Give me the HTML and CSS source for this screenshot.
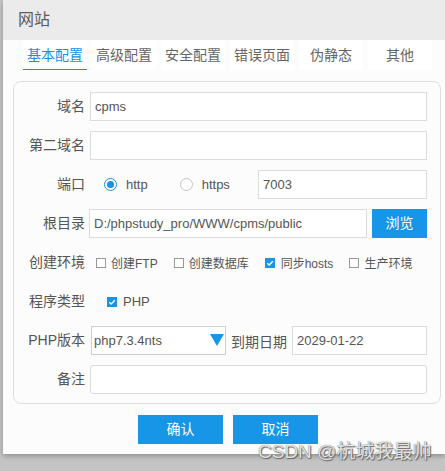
FILE: index.html
```html
<!DOCTYPE html>
<html lang="zh-CN">
<head>
<meta charset="utf-8">
<title>网站</title>
<link rel="stylesheet" href="styles.css">
</head>
<body>
<div class="dialog">
  <div class="header">网站</div>
  <div class="tabs">
    <div class="tab active">基本配置</div>
    <div class="tab">高级配置</div>
    <div class="tab">安全配置</div>
    <div class="tab">错误页面</div>
    <div class="tab">伪静态</div>
    <div class="tab">其他</div>
  </div>
  <div class="panel">
    <div class="label">域名</div>
    <div class="field"><div class="input full">cpms</div></div>

    <div class="label">第二域名</div>
    <div class="field"><div class="input full"></div></div>

    <div class="label">端口</div>
    <div class="field">
      <span class="radio checked"></span><span class="opt-text">http</span>
      <span class="radio second"></span><span class="opt-text">https</span>
      <div class="input port">7003</div>
    </div>

    <div class="label">根目录</div>
    <div class="field">
      <div class="input path">D:/phpstudy_pro/WWW/cpms/public</div>
      <div class="browse">浏览</div>
    </div>

    <div class="label">创建环境</div>
    <div class="field checks">
      <span class="check-item"><span class="box"></span>创建FTP</span>
      <span class="check-item"><span class="box"></span>创建数据库</span>
      <span class="check-item"><span class="box on"><svg viewBox="0 0 10 10" width="10" height="10"><path d="M2.2 5.2 L4.2 7 L7.8 3.2" fill="none" stroke="#fff" stroke-width="1.4"/></svg></span>同步hosts</span>
      <span class="check-item"><span class="box"></span>生产环境</span>
    </div>

    <div class="label">程序类型</div>
    <div class="field">
      <span class="check-item php"><span class="box on"><svg viewBox="0 0 10 10" width="10" height="10"><path d="M2.2 5.2 L4.2 7 L7.8 3.2" fill="none" stroke="#fff" stroke-width="1.4"/></svg></span>PHP</span>
    </div>

    <div class="label">PHP版本</div>
    <div class="field">
      <div class="select">php7.3.4nts<svg class="arrow" viewBox="0 0 14 12" width="14" height="12"><path d="M0 0 H14 L7 12 Z" fill="#1795e6"/></svg></div>
      <span class="inline-label">到期日期</span>
      <div class="input date">2029-01-22</div>
    </div>

    <div class="label">备注</div>
    <div class="field"><div class="input full note"></div></div>
  </div>
  <div class="actions">
    <div class="btn">确认</div>
    <div class="btn">取消</div>
  </div>
</div>
<div class="watermark">CSDN @杭城我最帅</div>
</body>
</html>
```

FILE: styles.css
```css
* { box-sizing: border-box; }
html, body {
  margin: 0;
  padding: 0;
}
body {
  width: 445px;
  height: 471px;
  background: #c4c4c4;
  font-family: "Liberation Sans", "Noto Sans CJK SC", sans-serif;
  color: #555;
  overflow: hidden;
  position: relative;
}
.dialog {
  margin-left: 3px;
  width: 442px;
  height: 454px;
  background: #fcfcfc;
  box-shadow: 0 2px 5px rgba(0, 0, 0, 0.28);
  display: flex;
  flex-direction: column;
}
.header {
  height: 40px;
  background: #ebebeb;
  font-size: 16px;
  line-height: 40px;
  padding-left: 15px;
  color: #5a5a5a;
}
.tabs {
  display: flex;
  gap: 5px;
  padding-left: 20px;
  height: 30px;
}
.tab {
  width: 64px;
  height: 30px;
  background: #fff;
  font-size: 14px;
  line-height: 30px;
  text-align: center;
  color: #666;
}
.tab.active {
  color: #1a8fe4;
  border-bottom: 1px solid #1a8fe4;
}
.panel {
  margin: 11px 0 0 10px;
  width: 428px;
  border: 1px solid #dedede;
  border-radius: 8px;
  padding: 10px 13px 9px 0;
  display: grid;
  grid-template-columns: 71px 1fr;
  column-gap: 5px;
  row-gap: 10px;
  grid-auto-rows: 29px;
}
.label {
  font-size: 14px;
  line-height: 29px;
  text-align: right;
  color: #555;
  white-space: nowrap;
}
.field {
  display: flex;
  align-items: center;
  min-width: 0;
}
.input {
  height: 29px;
  border: 1px solid #dcdcdc;
  background: #fff;
  font-size: 13px;
  line-height: 27px;
  padding-left: 4px;
  color: #555;
  white-space: nowrap;
  overflow: hidden;
}
.input.full { width: 337px; }
.input.note { border-radius: 3px; }
.radio {
  width: 13px;
  height: 13px;
  border-radius: 50%;
  border: 1px solid #c4c4c4;
  background: #fff;
  margin-left: 14px;
  position: relative;
  flex: none;
}
.radio.second { margin-left: 32px; }
.radio.checked { border-color: #1a8fe4; }
.radio.checked::after {
  content: "";
  position: absolute;
  left: 2px;
  top: 2px;
  width: 7px;
  height: 7px;
  border-radius: 50%;
  background: #1a8fe4;
}
.opt-text {
  font-size: 13px;
  margin-left: 9px;
  color: #555;
}
.input.port {
  margin-left: auto;
  width: 169px;
}
.input.path {
  width: 278px;
  margin-left: -1px;
}
.browse {
  margin-left: 5px;
  width: 55px;
  height: 29px;
  background: #1795e6;
  color: #fff;
  font-size: 14px;
  line-height: 29px;
  text-align: center;
}
.checks {
  gap: 16px;
  padding-left: 6px;
}
.check-item {
  display: flex;
  align-items: center;
  font-size: 12px;
  color: #555;
  white-space: nowrap;
}
.check-item.php {
  margin-left: 17px;
  font-size: 13px;
}
.box {
  width: 10px;
  height: 10px;
  border: 1px solid #9a9a9a;
  background: #fff;
  margin-right: 5px;
  flex: none;
  display: flex;
}
.box.on {
  border: none;
  background: #1795e6;
  margin-right: 6px;
}
.select {
  width: 135px;
  margin-left: 1px;
  height: 29px;
  border: 1px solid #cfcfcf;
  background: #fff;
  font-size: 13px;
  line-height: 27px;
  padding-left: 2px;
  color: #555;
  display: flex;
  align-items: center;
  justify-content: space-between;
  padding-right: 1px;
}
.select .arrow { margin-top: -2px; }
.inline-label {
  font-size: 14px;
  margin-left: 5px;
  margin-right: 5px;
  color: #555;
  white-space: nowrap;
}
.input.date { width: 135px; }
.actions {
  display: flex;
  justify-content: center;
  gap: 10px;
  padding-left: 8px;
  margin-top: 11px;
}
.btn {
  width: 85px;
  height: 29px;
  background: #1795e6;
  color: #fff;
  font-size: 14px;
  line-height: 29px;
  text-align: center;
}
.watermark {
  position: absolute;
  left: 258px;
  top: 439px;
  font-size: 19px;
  line-height: 26px;
  color: rgba(250, 250, 250, 0.85);
  text-shadow: 0 0 1px #555, 1px 1px 1px #666;
  white-space: nowrap;
}
```
